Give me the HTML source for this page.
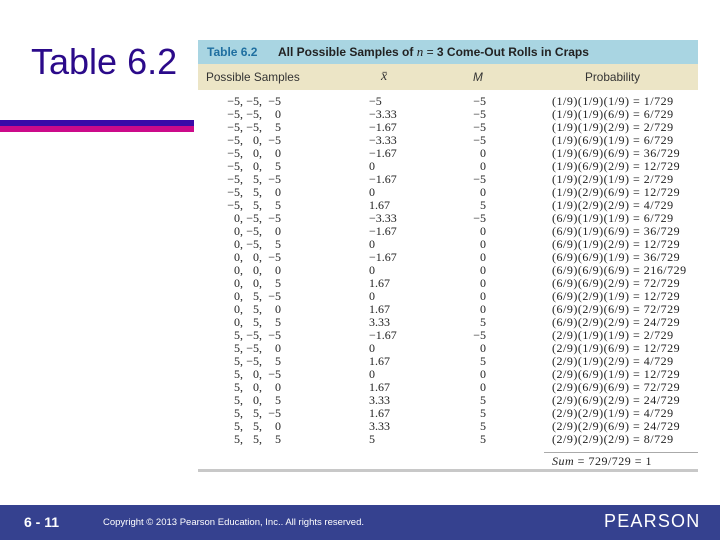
<!DOCTYPE html>
<html><head><meta charset="utf-8"><style>
body{margin:0;width:720px;height:540px;position:relative;background:#fff;overflow:hidden;font-family:"Liberation Sans",sans-serif}
.t{position:absolute;left:31px;top:41px;font-size:36px;color:#2b0a8a}
.b1{position:absolute;left:0;top:120px;width:194px;height:6px;background:#3a0aa8}
.b2{position:absolute;left:0;top:126px;width:194px;height:6px;background:#cc0a8a}
.h1{position:absolute;left:198px;top:40px;width:500px;height:24px;background:#a9d5e2;font-weight:bold;font-size:12px;line-height:24px;color:#222}
.h2{position:absolute;left:198px;top:64px;width:500px;height:26px;background:#ece5c6;font-size:11.8px;line-height:26px;color:#333}
table{position:absolute;left:198px;top:95px;border-collapse:collapse;font-family:"Liberation Serif",serif;font-size:12px;color:#222}
td{padding:0;height:13px;line-height:13px;white-space:nowrap}
td:last-child{letter-spacing:0.5px}
.r{text-align:right}
.foot{position:absolute;left:0;top:505px;width:720px;height:35px;background:#35418f;color:#fff}
</style></head><body>
<div class="t">Table 6.2</div>
<div class="b1"></div><div class="b2"></div>
<div class="h1"><span style="position:absolute;left:9px;color:#1f6fa0">Table 6.2</span><span style="position:absolute;left:80px">All Possible Samples of <i style="font-family:'Liberation Serif',serif;font-weight:normal;font-size:13px">n</i> <span style="font-weight:normal">=</span> 3 Come-Out Rolls in Craps</span></div>
<div class="h2"><span style="position:absolute;left:8px">Possible Samples</span><span style="position:absolute;left:183px;font-family:'Liberation Serif',serif;font-style:italic;font-size:14px">x̄</span><span style="position:absolute;left:275px;font-style:italic">M</span><span style="position:absolute;left:387px">Probability</span></div>
<table>
<colgroup><col style="width:45px"><col style="width:19px"><col style="width:19px"><col style="width:88px"><col style="width:71px"><col style="width:46px"><col style="width:66px"><col style="width:146px"></colgroup>
<tr><td class="r">−5,</td><td class="r">−5,</td><td class="r">−5</td><td></td><td>−5</td><td class="r">−5</td><td></td><td>(1/9)(1/9)(1/9) = 1/729</td></tr>
<tr><td class="r">−5,</td><td class="r">−5,</td><td class="r">0</td><td></td><td>−3.33</td><td class="r">−5</td><td></td><td>(1/9)(1/9)(6/9) = 6/729</td></tr>
<tr><td class="r">−5,</td><td class="r">−5,</td><td class="r">5</td><td></td><td>−1.67</td><td class="r">−5</td><td></td><td>(1/9)(1/9)(2/9) = 2/729</td></tr>
<tr><td class="r">−5,</td><td class="r">0,</td><td class="r">−5</td><td></td><td>−3.33</td><td class="r">−5</td><td></td><td>(1/9)(6/9)(1/9) = 6/729</td></tr>
<tr><td class="r">−5,</td><td class="r">0,</td><td class="r">0</td><td></td><td>−1.67</td><td class="r">0</td><td></td><td>(1/9)(6/9)(6/9) = 36/729</td></tr>
<tr><td class="r">−5,</td><td class="r">0,</td><td class="r">5</td><td></td><td>0</td><td class="r">0</td><td></td><td>(1/9)(6/9)(2/9) = 12/729</td></tr>
<tr><td class="r">−5,</td><td class="r">5,</td><td class="r">−5</td><td></td><td>−1.67</td><td class="r">−5</td><td></td><td>(1/9)(2/9)(1/9) = 2/729</td></tr>
<tr><td class="r">−5,</td><td class="r">5,</td><td class="r">0</td><td></td><td>0</td><td class="r">0</td><td></td><td>(1/9)(2/9)(6/9) = 12/729</td></tr>
<tr><td class="r">−5,</td><td class="r">5,</td><td class="r">5</td><td></td><td>1.67</td><td class="r">5</td><td></td><td>(1/9)(2/9)(2/9) = 4/729</td></tr>
<tr><td class="r">0,</td><td class="r">−5,</td><td class="r">−5</td><td></td><td>−3.33</td><td class="r">−5</td><td></td><td>(6/9)(1/9)(1/9) = 6/729</td></tr>
<tr><td class="r">0,</td><td class="r">−5,</td><td class="r">0</td><td></td><td>−1.67</td><td class="r">0</td><td></td><td>(6/9)(1/9)(6/9) = 36/729</td></tr>
<tr><td class="r">0,</td><td class="r">−5,</td><td class="r">5</td><td></td><td>0</td><td class="r">0</td><td></td><td>(6/9)(1/9)(2/9) = 12/729</td></tr>
<tr><td class="r">0,</td><td class="r">0,</td><td class="r">−5</td><td></td><td>−1.67</td><td class="r">0</td><td></td><td>(6/9)(6/9)(1/9) = 36/729</td></tr>
<tr><td class="r">0,</td><td class="r">0,</td><td class="r">0</td><td></td><td>0</td><td class="r">0</td><td></td><td>(6/9)(6/9)(6/9) = 216/729</td></tr>
<tr><td class="r">0,</td><td class="r">0,</td><td class="r">5</td><td></td><td>1.67</td><td class="r">0</td><td></td><td>(6/9)(6/9)(2/9) = 72/729</td></tr>
<tr><td class="r">0,</td><td class="r">5,</td><td class="r">−5</td><td></td><td>0</td><td class="r">0</td><td></td><td>(6/9)(2/9)(1/9) = 12/729</td></tr>
<tr><td class="r">0,</td><td class="r">5,</td><td class="r">0</td><td></td><td>1.67</td><td class="r">0</td><td></td><td>(6/9)(2/9)(6/9) = 72/729</td></tr>
<tr><td class="r">0,</td><td class="r">5,</td><td class="r">5</td><td></td><td>3.33</td><td class="r">5</td><td></td><td>(6/9)(2/9)(2/9) = 24/729</td></tr>
<tr><td class="r">5,</td><td class="r">−5,</td><td class="r">−5</td><td></td><td>−1.67</td><td class="r">−5</td><td></td><td>(2/9)(1/9)(1/9) = 2/729</td></tr>
<tr><td class="r">5,</td><td class="r">−5,</td><td class="r">0</td><td></td><td>0</td><td class="r">0</td><td></td><td>(2/9)(1/9)(6/9) = 12/729</td></tr>
<tr><td class="r">5,</td><td class="r">−5,</td><td class="r">5</td><td></td><td>1.67</td><td class="r">5</td><td></td><td>(2/9)(1/9)(2/9) = 4/729</td></tr>
<tr><td class="r">5,</td><td class="r">0,</td><td class="r">−5</td><td></td><td>0</td><td class="r">0</td><td></td><td>(2/9)(6/9)(1/9) = 12/729</td></tr>
<tr><td class="r">5,</td><td class="r">0,</td><td class="r">0</td><td></td><td>1.67</td><td class="r">0</td><td></td><td>(2/9)(6/9)(6/9) = 72/729</td></tr>
<tr><td class="r">5,</td><td class="r">0,</td><td class="r">5</td><td></td><td>3.33</td><td class="r">5</td><td></td><td>(2/9)(6/9)(2/9) = 24/729</td></tr>
<tr><td class="r">5,</td><td class="r">5,</td><td class="r">−5</td><td></td><td>1.67</td><td class="r">5</td><td></td><td>(2/9)(2/9)(1/9) = 4/729</td></tr>
<tr><td class="r">5,</td><td class="r">5,</td><td class="r">0</td><td></td><td>3.33</td><td class="r">5</td><td></td><td>(2/9)(2/9)(6/9) = 24/729</td></tr>
<tr><td class="r">5,</td><td class="r">5,</td><td class="r">5</td><td></td><td>5</td><td class="r">5</td><td></td><td>(2/9)(2/9)(2/9) = 8/729</td></tr>
</table>
<div style="position:absolute;left:544px;top:452px;width:154px;height:1px;background:#aaa"></div>
<div style="position:absolute;left:552px;top:454px;font-family:'Liberation Serif',serif;font-size:12px;color:#222;letter-spacing:0.5px"><i>Sum</i> = 729/729 = 1</div>
<div style="position:absolute;left:198px;top:469px;width:500px;height:3px;background:#c8c8c8"></div>
<div class="foot">
<span style="position:absolute;left:24px;top:9px;font-size:14px;font-weight:bold">6 - 11</span>
<span style="position:absolute;left:103px;top:12px;font-size:9.5px">Copyright © 2013 Pearson Education, Inc.. All rights reserved.</span>
<span style="position:absolute;left:604px;top:6px;font-size:18px;letter-spacing:1.2px">PEARSON</span>
</div>
</body></html>
